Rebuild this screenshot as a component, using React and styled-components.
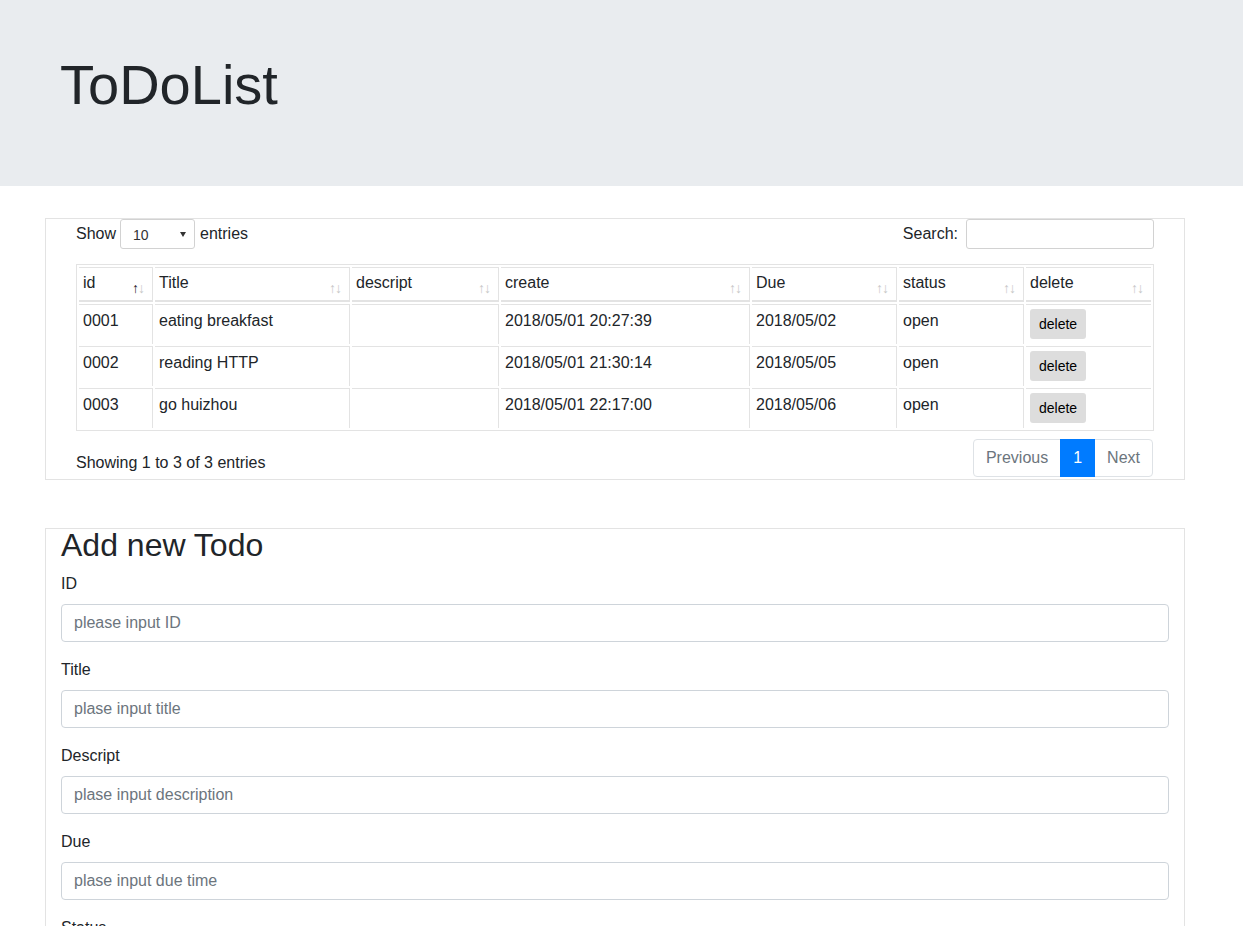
import React from "react";
import styled, { createGlobalStyle } from "styled-components";

const todos = [
  { id: "0001", title: "eating breakfast", descript: "", create: "2018/05/01 20:27:39", due: "2018/05/02", status: "open" },
  { id: "0002", title: "reading HTTP", descript: "", create: "2018/05/01 21:30:14", due: "2018/05/05", status: "open" },
  { id: "0003", title: "go huizhou", descript: "", create: "2018/05/01 22:17:00", due: "2018/05/06", status: "open" },
];

const columns = [
  { name: "id", width: 74, active: true },
  { name: "Title", width: 195 },
  { name: "descript", width: 147 },
  { name: "create", width: 249 },
  { name: "Due", width: 145 },
  { name: "status", width: 125 },
  { name: "delete", width: 125 },
];

const fields = [
  { label: "ID", placeholder: "please input ID" },
  { label: "Title", placeholder: "plase input title" },
  { label: "Descript", placeholder: "plase input description" },
  { label: "Due", placeholder: "plase input due time" },
];

function App() {
  return (
    <>
      <GlobalStyle />
      <Jumbotron>
        <Container>
          <Title>ToDoList</Title>
        </Container>
      </Jumbotron>
      <Main>
        <TableBox>
          <Controls>
            <ControlLabel>
              Show
              <SelectWrap>
                <LengthSelect defaultValue="10">
                  <option>10</option>
                  <option>25</option>
                  <option>50</option>
                  <option>100</option>
                </LengthSelect>
              </SelectWrap>
              entries
            </ControlLabel>
            <ControlLabel>
              Search:
              <SearchInput type="search" />
            </ControlLabel>
          </Controls>
          <DataTable>
            <thead>
              <tr>
                {columns.map((col) => (
                  <Th key={col.name} $w={col.width}>
                    {col.name}
                    <SortIcon>
                      <Arrow $on={col.active}>↑</Arrow>
                      <Arrow>↓</Arrow>
                    </SortIcon>
                  </Th>
                ))}
              </tr>
            </thead>
            <tbody>
              {todos.map((item) => (
                <tr key={item.id}>
                  <Td>{item.id}</Td>
                  <Td>{item.title}</Td>
                  <Td>{item.descript}</Td>
                  <Td>{item.create}</Td>
                  <Td>{item.due}</Td>
                  <Td>{item.status}</Td>
                  <Td>
                    <DeleteButton>delete</DeleteButton>
                  </Td>
                </tr>
              ))}
            </tbody>
          </DataTable>
          <Footer>
            <Info>Showing 1 to 3 of 3 entries</Info>
            <Pager>
              <PageItem $first>Previous</PageItem>
              <PageItem $active>1</PageItem>
              <PageItem $last>Next</PageItem>
            </Pager>
          </Footer>
        </TableBox>

        <FormBox>
          <FormTitle>Add new Todo</FormTitle>
          {fields.map((f) => (
            <FormGroup key={f.label}>
              <Label>{f.label}</Label>
              <Input placeholder={f.placeholder} />
            </FormGroup>
          ))}
          <FormGroup>
            <Label>Status</Label>
            <Input placeholder="plase input status" />
          </FormGroup>
          <SubmitButton>Submit</SubmitButton>
        </FormBox>
      </Main>
    </>
  );
}

const GlobalStyle = createGlobalStyle`
  *, *::before, *::after { box-sizing: border-box; }
  body {
    margin: 0;
    font-family: "Liberation Sans", Arial, sans-serif;
    font-size: 16px;
    line-height: 1.5;
    color: #212529;
    background: #fff;
  }
`;

const Jumbotron = styled.header`
  background: #e9ecef;
  padding: 51px 0 68px;
  margin-bottom: 32px;
`;

const Container = styled.div`
  width: 1140px;
  margin-left: 45px;
  padding: 0 15px;
`;

const Title = styled.h1`
  margin: 0;
  font-size: 56px;
  font-weight: 300;
  line-height: 67px;
`;

const Main = styled.main`
  width: 1140px;
  margin-left: 45px;
  padding-bottom: 40px;
`;

const TableBox = styled.section`
  border: 1px solid #e3e3e3;
  padding: 0 30px 2px;
`;

const Controls = styled.div`
  display: flex;
  justify-content: space-between;
  align-items: center;
  height: 30px;
  margin-bottom: 15px;
`;

const ControlLabel = styled.label`
  display: flex;
  align-items: center;
  line-height: 24px;
`;

const SelectWrap = styled.span`
  position: relative;
  display: inline-block;
  margin: 0 5px 0 4px;
  &::after {
    content: "";
    position: absolute;
    right: 9px;
    top: 13px;
    border-left: 3px solid transparent;
    border-right: 3px solid transparent;
    border-top: 5px solid #333;
    pointer-events: none;
  }
`;

const LengthSelect = styled.select`
  appearance: none;
  width: 75px;
  height: 30px;
  padding: 2px 12px 0;
  font-family: "Liberation Sans", Arial, sans-serif;
  font-size: 14px;
  color: #333;
  background: #fff;
  border: 1px solid #d2d2d2;
  border-radius: 3px;
`;

const SearchInput = styled.input`
  width: 188px;
  height: 30px;
  margin-left: 8px;
  border: 1px solid #d2d2d2;
  border-radius: 3px;
  background: #fff;
  font-size: 14px;
`;

const DataTable = styled.table`
  width: 100%;
  table-layout: fixed;
  border-collapse: separate;
  border-spacing: 2px;
  border: 1px solid #e3e3e3;
`;

const Th = styled.th`
  position: relative;
  width: ${(p) => p.$w}px;
  padding: 3px 28px 5px 4px;
  border-style: solid;
  border-color: #e3e3e3;
  border-width: 1px 1px 2px 0;
  font-weight: 400;
  text-align: left;
  line-height: 24px;
  &:last-child {
    border-right-width: 0;
  }
`;

const SortIcon = styled.span`
  position: absolute;
  right: 8px;
  top: 10px;
  display: flex;
  font-size: 14px;
  line-height: 20px;
  letter-spacing: -1px;
`;

const Arrow = styled.span`
  color: ${(p) => (p.$on ? "#222" : "#c8c8c8")};
`;

const Td = styled.td`
  height: 40px;
  padding: 4px 4px 4px;
  border-style: solid;
  border-color: #e3e3e3;
  border-width: 1px 1px 0 0;
  vertical-align: top;
  line-height: 24px;
  white-space: nowrap;
  &:last-child {
    border-right-width: 0;
  }
`;

const DeleteButton = styled.button`
  display: block;
  height: 30px;
  padding: 0 9px;
  border: none;
  border-radius: 3px;
  background: #dddddd;
  color: #000;
  font-family: "Liberation Sans", Arial, sans-serif;
  font-size: 14px;
`;

const Footer = styled.div`
  display: flex;
  justify-content: space-between;
  align-items: flex-start;
  margin-top: 8px;
`;

const Info = styled.div`
  padding-top: 12px;
  line-height: 24px;
`;

const Pager = styled.div`
  display: flex;
  margin-right: 1px;
`;

const PageItem = styled.span`
  display: block;
  padding: 6px 12px;
  margin-left: ${(p) => (p.$first ? "0" : "-1px")};
  line-height: 24px;
  border: 1px solid ${(p) => (p.$active ? "#007bff" : "#dee2e6")};
  background: ${(p) => (p.$active ? "#007bff" : "#fff")};
  color: ${(p) => (p.$active ? "#fff" : "#6c757d")};
  border-radius: ${(p) =>
    p.$first ? "4px 0 0 4px" : p.$last ? "0 4px 4px 0" : "0"};
  position: relative;
  z-index: ${(p) => (p.$active ? 1 : 0)};
`;

const FormBox = styled.section`
  margin-top: 48px;
  border: 1px solid #e3e3e3;
  padding: 0 15px 16px;
`;

const FormTitle = styled.h2`
  margin: 0 0 11px;
  font-size: 32px;
  font-weight: 500;
  line-height: 32px;
`;

const FormGroup = styled.div`
  margin-bottom: 16px;
`;

const Label = styled.label`
  display: block;
  margin-bottom: 8px;
  line-height: 24px;
`;

const Input = styled.input`
  display: block;
  width: 100%;
  height: 38px;
  padding: 6px 12px;
  font-family: "Liberation Sans", Arial, sans-serif;
  font-size: 16px;
  color: #495057;
  background: #fff;
  border: 1px solid #ced4da;
  border-radius: 4px;
  &::placeholder {
    color: #6c757d;
  }
`;

const SubmitButton = styled.button`
  padding: 6px 12px;
  font-family: "Liberation Sans", Arial, sans-serif;
  font-size: 16px;
  color: #fff;
  background: #007bff;
  border: 1px solid #007bff;
  border-radius: 4px;
`;

export default App;
